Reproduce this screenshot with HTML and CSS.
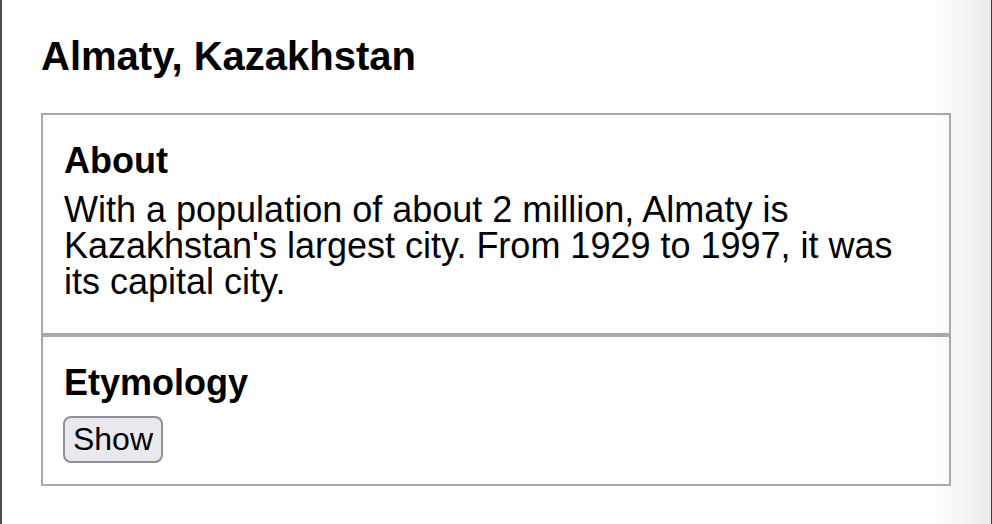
FILE: index.html
```html
<!DOCTYPE html>
<html lang="en">
<head>
<meta charset="utf-8">
<title>Almaty, Kazakhstan</title>
<link rel="stylesheet" href="styles.css">
</head>
<body>
<div class="frame">
  <main class="content">
    <h1 class="title">Almaty, Kazakhstan</h1>
    <div class="card">
      <section class="section">
        <h2 class="section-title">About</h2>
        <p class="section-text">With a population of about 2 million, Almaty is Kazakhstan's largest city. From 1929 to 1997, it was its capital city.</p>
      </section>
      <section class="section">
        <h2 class="section-title">Etymology</h2>
        <button class="show-btn" type="button">Show</button>
      </section>
    </div>
  </main>
</div>
</body>
</html>
```
FILE: styles.css
```css
html, body {
  margin: 0;
  padding: 0;
  height: 524px;
  overflow: hidden;
  background: #fff;
}

.frame {
  box-sizing: border-box;
  height: 524px;
  border-left: 2px solid #4e4e4e;
  border-right: 1px solid #3c3c3c;
  background: linear-gradient(to right, #ffffff 0, #ffffff calc(100% - 62px), #f6f6f6 calc(100% - 30px), #ebebeb 100%);
  font-family: "Liberation Sans", Arial, sans-serif;
  color: #000;
}

.content {
  padding: 36px 40px 0 39px;
}

.title {
  margin: 0;
  font-size: 40px;
  line-height: 40px;
  font-weight: bold;
}

.card {
  margin-top: 37px;
}

.section {
  border: 2px solid #a8a8a8;
  padding: 28px 20px 21px 21px;
}

.section-title {
  margin: 0;
  font-size: 36px;
  line-height: 36px;
  font-weight: bold;
}

.section-text {
  margin: 12.5px 0 12.5px;
  font-size: 36px;
  line-height: 36px;
}

.show-btn {
  display: block;
  box-sizing: border-box;
  margin: 14.5px 0 0 -1px;
  width: 100px;
  height: 47px;
  padding: 0;
  border: 2px solid #8f8f98;
  border-radius: 8px;
  background: #e9e9ed;
  color: #000;
  font-family: "Liberation Sans", Arial, sans-serif;
  font-size: 32px;
  line-height: 43px;
  text-align: center;
}
```
